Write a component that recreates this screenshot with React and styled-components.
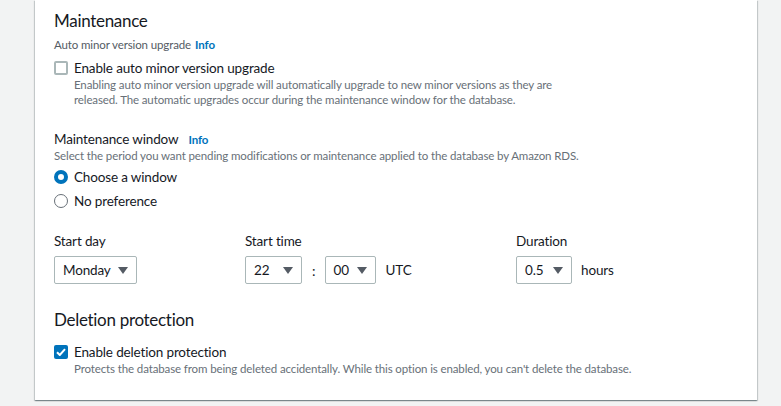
import React from "react";
import styled, { createGlobalStyle } from "styled-components";

const GlobalStyle = createGlobalStyle`
  html, body {
    margin: 0;
    padding: 0;
    background: #f2f3f3;
    font-family: Lato, "Liberation Sans", Arial, sans-serif;
    color: #16191f;
  }
`;

const Page = styled.div`
  width: 781px;
  height: 406px;
  overflow: hidden;
  padding: 0 24px 0 35px;
  box-sizing: border-box;
`;

const Card = styled.section`
  background: #fff;
  box-shadow: 0 1px 1px 0 rgba(0, 28, 36, 0.3), 1px 1px 1px 0 rgba(0, 28, 36, 0.15),
    -1px 1px 1px 0 rgba(0, 28, 36, 0.15);
  padding: 10px 19px 24px;
`;

const Heading = styled.h2`
  margin: 0;
  font-size: 17px;
  letter-spacing: -0.3px;
  line-height: 22px;
  font-weight: 400;
  color: #16191f;
  margin-top: ${(p) => p.$top || 0}px;
`;

const SmallLabel = styled.div`
  margin-top: 5px;
  font-size: 11.5px;
  letter-spacing: -0.12px;
  line-height: 16px;
  color: #545b64;
`;

const Info = styled.a`
  color: #0073bb;
  font-weight: 700;
  font-size: 11.5px;
  letter-spacing: -0.1px;
  text-decoration: none;
  margin-left: ${(p) => p.$gap || 4}px;
`;

const OptionRow = styled.label`
  display: grid;
  grid-template-columns: 14px 1fr;
  column-gap: 6px;
  margin-top: ${(p) => p.$top || 0}px;
`;

const Box = styled.span`
  width: 14px;
  height: 14px;
  box-sizing: border-box;
  margin-top: 2px;
  border-radius: 2px;
  border: ${(p) => (p.$checked ? "none" : "2px solid #aab7b8")};
  background: ${(p) => (p.$checked ? "#0073bb" : "#fff")};
  display: flex;
  align-items: center;
  justify-content: center;
`;

const Radio = styled.span`
  width: 14px;
  height: 14px;
  box-sizing: border-box;
  margin-top: 2px;
  border-radius: 50%;
  border: ${(p) => (p.$checked ? "4px solid #0073bb" : "1.5px solid #687078")};
  background: #fff;
`;

const OptionText = styled.span`
  font-size: 13.5px;
  letter-spacing: -0.15px;
  line-height: 18px;
  color: #16191f;
`;

const OptionDesc = styled.span`
  grid-column: 2;
  font-size: 11.5px;
  letter-spacing: -0.12px;
  line-height: 15px;
  color: #687078;
  max-width: ${(p) => p.$max || "none"};
`;

const FieldLabel = styled.div`
  font-size: 13.5px;
  letter-spacing: -0.15px;
  line-height: 17px;
  color: #16191f;
  margin-top: ${(p) => p.$top || 0}px;
`;

const FieldDesc = styled.div`
  font-size: 11.5px;
  letter-spacing: -0.12px;
  line-height: 16px;
  color: #687078;
`;

const RadioGroup = styled.div`
  margin-top: 4px;
  display: flex;
  flex-direction: column;
  gap: 6px;
`;

const Schedule = styled.div`
  margin-top: 23px;
  display: grid;
  grid-template-columns: 191px 271px auto;
`;

const Field = styled.div`
  display: flex;
  flex-direction: column;
  gap: 6px;
`;

const Controls = styled.div`
  display: flex;
  align-items: center;
`;

const Select = styled.div`
  width: ${(p) => p.$w}px;
  height: 28px;
  box-sizing: border-box;
  border: 1px solid #aab7b8;
  border-radius: 2px;
  padding: 0 8px;
  display: flex;
  align-items: center;
  justify-content: space-between;
  font-size: 13.5px;
  letter-spacing: -0.15px;
  color: #16191f;
`;

const Caret = styled.svg`
  width: 10px;
  height: 7px;
  fill: #545b64;
`;

const Sep = styled.span`
  font-size: 14px;
  margin: 0 9px 0 10px;
`;

const Unit = styled.span`
  font-size: 13.5px;
  letter-spacing: -0.15px;
  margin-left: ${(p) => p.$gap || 10}px;
`;

const CheckMark = () => (
  <svg width="10" height="8" viewBox="0 0 10 8">
    <path d="M1 4.2 L3.8 7 L9 1.2" fill="none" stroke="#fff" strokeWidth="2" />
  </svg>
);

const Dropdown = ({ value, w }) => (
  <Select $w={w}>
    <span>{value}</span>
    <Caret viewBox="0 0 10 7">
      <path d="M0 0 H10 L5 7 Z" />
    </Caret>
  </Select>
);

export default function App() {
  return (
    <>
      <GlobalStyle />
      <Page>
        <Card>
          <Heading>Maintenance</Heading>
          <SmallLabel>
            Auto minor version upgrade<Info>Info</Info>
          </SmallLabel>
          <OptionRow $top={6}>
            <Box />
            <OptionText>Enable auto minor version upgrade</OptionText>
            <OptionDesc $max="490px">
              Enabling auto minor version upgrade will automatically upgrade to new minor versions as they are
              released. The automatic upgrades occur during the maintenance window for the database.
            </OptionDesc>
          </OptionRow>

          <FieldLabel $top={24}>
            Maintenance window<Info $gap={10}>Info</Info>
          </FieldLabel>
          <FieldDesc>
            Select the period you want pending modifications or maintenance applied to the database by Amazon RDS.
          </FieldDesc>
          <RadioGroup>
            <OptionRow>
              <Radio $checked />
              <OptionText>Choose a window</OptionText>
            </OptionRow>
            <OptionRow>
              <Radio />
              <OptionText>No preference</OptionText>
            </OptionRow>
          </RadioGroup>

          <Schedule>
            <Field>
              <FieldLabel>Start day</FieldLabel>
              <Controls>
                <Dropdown value="Monday" w={83} />
              </Controls>
            </Field>
            <Field>
              <FieldLabel>Start time</FieldLabel>
              <Controls>
                <Dropdown value="22" w={57} />
                <Sep>:</Sep>
                <Dropdown value="00" w={51} />
                <Unit>UTC</Unit>
              </Controls>
            </Field>
            <Field>
              <FieldLabel>Duration</FieldLabel>
              <Controls>
                <Dropdown value="0.5" w={56} />
                <Unit $gap={9}>hours</Unit>
              </Controls>
            </Field>
          </Schedule>

          <Heading $top={25}>Deletion protection</Heading>
          <OptionRow $top={12}>
            <Box $checked>
              <CheckMark />
            </Box>
            <OptionText>Enable deletion protection</OptionText>
            <OptionDesc>
              Protects the database from being deleted accidentally. While this option is enabled, you can't delete the database.
            </OptionDesc>
          </OptionRow>
        </Card>
      </Page>
    </>
  );
}
